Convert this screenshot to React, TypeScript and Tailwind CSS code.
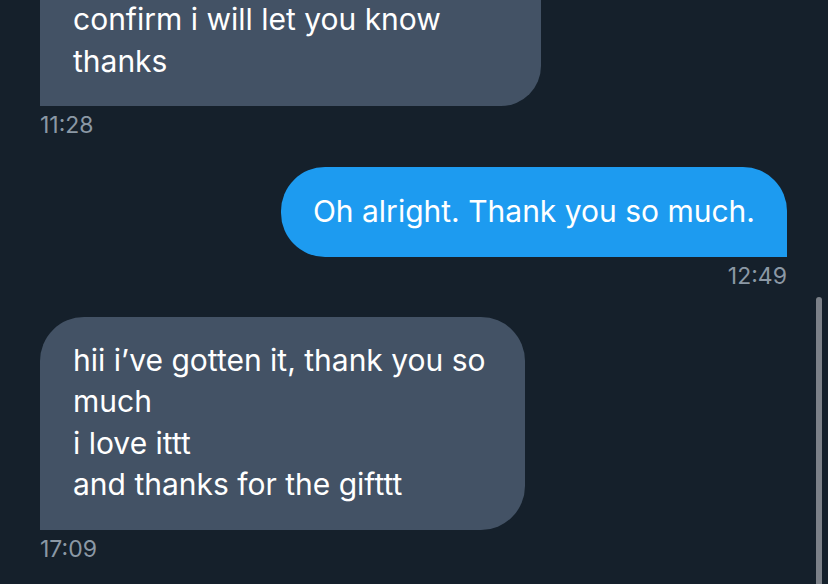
export default function App() {
  return (
    <div className="relative h-[584px] w-[828px] overflow-hidden bg-[#15202b] font-['Inter',sans-serif] text-white">
      <div className="flex flex-col">
        {/* received, cut at top */}
        <div className="-mt-[1px] ml-[40px] w-[501px] rounded-b-[40px] rounded-bl-none bg-[#435265] pb-[24px] pl-[33px] pr-[30px] text-[30px] leading-[41.5px]">
          <p>confirm i will let you know</p>
          <p>thanks</p>
        </div>
        <p className="ml-[40px] mt-[6px] text-[23px] leading-[26px] text-[#8b98a5]">11:28</p>

        {/* sent */}
        <div className="mr-[41px] mt-[29px] self-end rounded-[44px] rounded-br-none bg-[#1d9bf0] px-[32px] py-[24px] text-[30px] leading-[41.5px]">
          Oh alright. Thank you so much.
        </div>
        <p className="mr-[41px] mt-[6px] self-end text-[23px] leading-[26px] text-[#8b98a5]">12:49</p>

        {/* received */}
        <div className="ml-[40px] mt-[28px] w-[485px] rounded-[44px] rounded-bl-none bg-[#435265] pb-[24px] pt-[23px] pl-[33px] pr-[26px] text-[30px] leading-[41.5px]">
          <p>hii i’ve gotten it, thank you so much</p>
          <p>i love ittt</p>
          <p>and thanks for the gifttt</p>
        </div>
        <p className="ml-[40px] mt-[6px] text-[23px] leading-[26px] text-[#8b98a5]">17:09</p>
      </div>

      {/* scroll indicator */}
      <div className="absolute right-[6px] top-[297px] h-[300px] w-[6px] rounded-full bg-[#7b8088]" />
    </div>
  );
}
